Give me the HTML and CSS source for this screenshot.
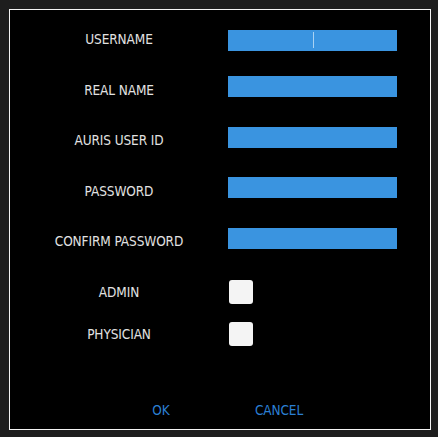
FILE: index.html
```html
<!DOCTYPE html>
<html lang="en">
<head>
    <meta charset="UTF-8">
    <title>New user</title>
    <link rel="stylesheet" href="styles.css">
</head>
<body>
<div id="dialog">
    <div id="fields">
        <div class="field">
            <label>USERNAME</label>
            <div class="text-input focused"><span class="caret"></span></div>
        </div>
        <div class="field">
            <label>REAL NAME</label>
            <div class="text-input"></div>
        </div>
        <div class="field">
            <label>AURIS USER ID</label>
            <div class="text-input"></div>
        </div>
        <div class="field">
            <label>PASSWORD</label>
            <div class="text-input"></div>
        </div>
        <div class="field">
            <label>CONFIRM PASSWORD</label>
            <div class="text-input"></div>
        </div>
    </div>
    <div id="flags">
        <div class="flag">
            <label>ADMIN</label>
            <div class="check"></div>
        </div>
        <div class="flag">
            <label>PHYSICIAN</label>
            <div class="check"></div>
        </div>
    </div>
    <div id="buttons">
        <button type="button">OK</button>
        <button type="button">CANCEL</button>
    </div>
</div>
</body>
</html>
```

FILE: styles.css
```css
* {
    margin: 0;
    border: 0;
    padding: 0;
    box-sizing: border-box;
}
html, body {
    height: 100%;
}
body {
    background-color: #1e1e1e;
    padding: 9px;
    font-family: "DejaVu Sans Condensed", "DejaVu Sans", sans-serif;
    font-size: 13.5px;
    letter-spacing: -0.1px;
    color: #e2e2e2;
}
#dialog {
    width: 422px;
    height: 421px;
    border: 1px solid #f4f4f4;
    background-color: #000;
    display: flex;
    flex-direction: column;
}
#fields {
    padding-top: 4px;
}
.field, .flag {
    display: grid;
    grid-template-columns: 218px 170px;
    align-items: center;
    height: 50.5px;
}
.flag {
    height: 42px;
}
#flags {
    margin-top: 4px;
}
label {
    text-align: center;
    line-height: 16px;
}
.text-input {
    width: 169px;
    height: 21px;
    background-color: #3a94e0;
    margin-bottom: 6px;
    display: flex;
    justify-content: center;
    align-items: center;
}
.text-input.focused {
    margin-bottom: 0;
    margin-top: 2px;
}
.caret {
    width: 1px;
    height: 16px;
    background-color: #a9d2f3;
    margin-left: 1px;
}
.check {
    width: 24px;
    height: 24px;
    margin-left: 1px;
    border-radius: 3px;
    background-color: #f4f4f4;
}
#buttons {
    margin-top: auto;
    display: flex;
    justify-content: center;
}
button {
    width: 118px;
    height: 38px;
    background: none;
    font-family: inherit;
    font-size: 13.5px;
    letter-spacing: inherit;
    color: #2b7fd3;
}
```
